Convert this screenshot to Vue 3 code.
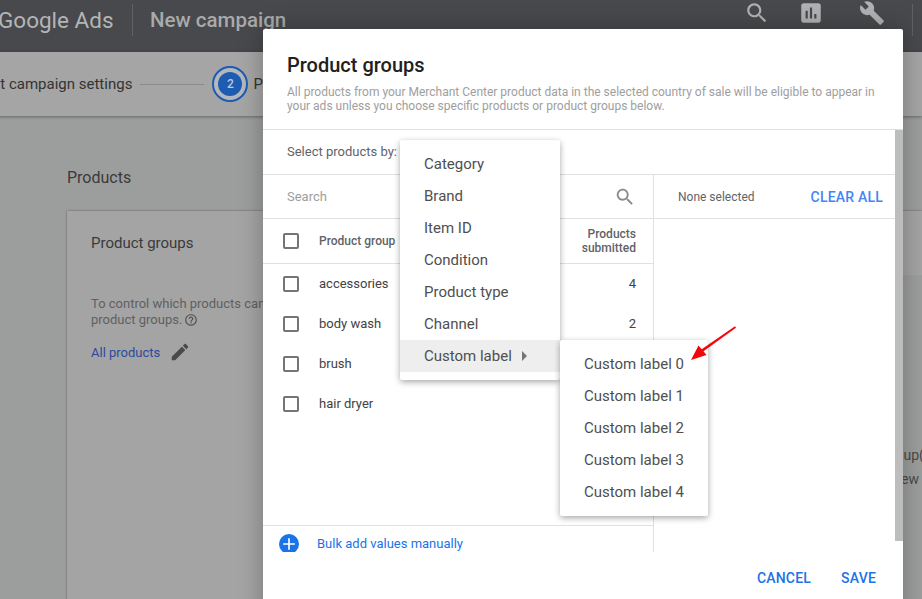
<template>
  <div class="page">
    <header class="topbar">
      <div class="brand">Google Ads</div>
      <div class="divider"></div>
      <div class="topbar-title">New campaign</div>
      <div class="topbar-icons">
        <svg class="top-icon" viewBox="0 0 24 24"><path :d="icons.search" /></svg>
        <svg class="top-icon" viewBox="0 0 24 24"><path :d="icons.assessment" /></svg>
        <svg class="top-icon wrench" viewBox="0 0 24 24"><path :d="icons.build" /></svg>
        <div class="divider"></div>
      </div>
    </header>

    <div class="stepper">
      <span class="step-text">Select campaign settings</span>
      <span class="step-line"></span>
      <span class="step-circle"><span class="step-num">2</span></span>
      <span class="step-text">Products</span>
    </div>

    <main class="content">
      <h2 class="section-title">Products</h2>
      <section class="card">
        <h3 class="card-title">Product groups</h3>
        <p class="card-text">
          To control which products can appear in your ads, select specific<br />
          product groups.<svg class="help" viewBox="0 0 24 24"><path :d="icons.help" /></svg>
        </p>
        <div class="card-link">
          <a>All products</a>
          <svg class="edit" viewBox="0 0 24 24"><path :d="icons.edit" /></svg>
        </div>
        <div class="card-side">
          <span class="side-group">group(s)</span>
          <span class="side-preview">preview</span>
        </div>
      </section>
    </main>

    <div class="modal">
      <div class="modal-head">
        <h1>Product groups</h1>
        <p>All products from your Merchant Center product data in the selected country of sale will be eligible to appear in your ads unless you choose specific products or product groups below.</p>
      </div>

      <div class="modal-body">
        <div class="select-row">Select products by:</div>
        <div class="columns">
          <div class="col-left">
            <div class="search-row">
              <span>Search</span>
              <svg class="search-icon" viewBox="0 0 24 24"><path :d="icons.search" /></svg>
            </div>
            <div class="table-head">
              <span class="check"></span>
              <span class="th-name">Product group</span>
              <span class="th-count">Products<br />submitted</span>
            </div>
            <div class="rows">
              <div v-for="row in rows" :key="row.name" class="row">
                <span class="check"></span>
                <span class="row-name">{{ row.name }}</span>
                <span class="row-count">{{ row.count }}</span>
              </div>
            </div>
            <div class="bulk-row">
              <span class="plus">
                <svg viewBox="0 0 24 24"><path d="M19 13h-6v6h-2v-6H5v-2h6V5h2v6h6v2z" /></svg>
              </span>
              <a>Bulk add values manually</a>
            </div>
          </div>
          <div class="col-right">
            <div class="selected-row">
              <span>None selected</span>
              <a>CLEAR ALL</a>
            </div>
          </div>
        </div>
        <div class="scrollbar"></div>
      </div>

      <div class="modal-foot">
        <a>CANCEL</a>
        <a>SAVE</a>
      </div>

      <ul class="menu main-menu">
        <li v-for="item in menuItems" :key="item" :class="{ active: item === 'Custom label' }">
          {{ item }}
          <span v-if="item === 'Custom label'" class="caret"></span>
        </li>
      </ul>
      <ul class="menu sub-menu">
        <li v-for="n in 5" :key="n">Custom label {{ n - 1 }}</li>
      </ul>
    </div>

    <svg class="red-arrow" viewBox="0 0 50 40" width="50" height="40">
      <path d="M45 1.2 L46 2.8 L13.5 26.3 L16.5 30 L1 35 L8.5 20.5 L11.7 24.3 Z" fill="#f5060b" />
    </svg>
  </div>
</template>

<script setup>
const icons = {
  search: 'M15.5 14h-.79l-.28-.27C15.41 12.59 16 11.11 16 9.5 16 5.91 13.09 3 9.5 3S3 5.91 3 9.5 5.91 16 9.5 16c1.61 0 3.09-.59 4.23-1.57l.27.28v.79l5 4.99L20.49 19l-4.99-5zm-6 0C7.01 14 5 11.99 5 9.5S7.01 5 9.5 5 14 7.01 14 9.5 11.99 14 9.5 14z',
  assessment: 'M19 3H5c-1.1 0-2 .9-2 2v14c0 1.1.9 2 2 2h14c1.1 0 2-.9 2-2V5c0-1.1-.9-2-2-2zM9 17H7v-7h2v7zm4 0h-2V7h2v10zm4 0h-2v-4h2v4z',
  build: 'M22.7 19l-9.1-9.1c.9-2.3.4-5-1.5-6.9-2-2-5-2.4-7.4-1.3L9 6 6 9 1.6 4.7C.4 7.1.9 10.1 2.9 12.1c1.9 1.9 4.6 2.4 6.9 1.5l9.1 9.1c.4.4 1 .4 1.4 0l2.3-2.3c.5-.4.5-1.1.1-1.4z',
  edit: 'M3 17.25V21h3.75L17.81 9.94l-3.75-3.75L3 17.25zM20.71 7.04c.39-.39.39-1.02 0-1.41l-2.34-2.34c-.39-.39-1.02-.39-1.41 0l-1.83 1.83 3.75 3.75 1.83-1.83z',
  help: 'M11 18h2v-2h-2v2zm1-16C6.48 2 2 6.48 2 12s4.48 10 10 10 10-4.48 10-10S17.52 2 12 2zm0 18c-4.41 0-8-3.59-8-8s3.59-8 8-8 8 3.59 8 8-3.59 8-8 8zm0-14c-2.21 0-4 1.79-4 4h2c0-1.1.9-2 2-2s2 .9 2 2c0 2-3 1.75-3 5h2c0-2.25 3-2.5 3-5 0-2.21-1.79-4-4-4z'
}

const rows = [
  { name: 'accessories', count: 4 },
  { name: 'body wash', count: 2 },
  { name: 'brush', count: '' },
  { name: 'hair dryer', count: '' }
]

const menuItems = ['Category', 'Brand', 'Item ID', 'Condition', 'Product type', 'Channel', 'Custom label']
</script>

<style>
html,
body {
  margin: 0;
  overflow: hidden;
  background: #9c9e9d;
}
</style>

<style scoped>
.page {
  position: relative;
  width: 922px;
  height: 599px;
  overflow: hidden;
  background: #9c9e9d;
  font-family: Roboto, sans-serif;
}

.topbar {
  height: 52px;
  display: flex;
  align-items: flex-start;
  background: #47494c;
  box-shadow: 0 1px 3px rgba(0, 0, 0, 0.3);
  position: relative;
}

.brand {
  margin-left: -2px;
  width: 134px;
  flex: none;
  padding-top: 7px;
  font-size: 22.5px;
  line-height: 26px;
  color: #b4b5b6;
  white-space: nowrap;
}

.divider {
  width: 1px;
  height: 32px;
  margin-top: 4px;
  background: #5f6163;
  flex: none;
}

.topbar-title {
  margin-left: 17px;
  padding-top: 7px;
  font-size: 20.5px;
  line-height: 26px;
  font-weight: 500;
  color: #a9aaab;
}

.topbar-icons {
  margin-left: auto;
  margin-right: 9px;
  display: flex;
  align-items: flex-start;
}

.top-icon {
  width: 26px;
  height: 26px;
  margin-right: 28px;
  fill: #b0b1b2;
}

.top-icon + .wrench {
  margin-left: 7px;
  margin-right: 27px;
}

.stepper {
  height: 64px;
  display: flex;
  align-items: center;
  justify-content: flex-start;
  margin-left: -36px;
  background: #a5a5a5;
  box-shadow: 0 1px 3px rgba(0, 0, 0, 0.35);
  position: relative;
  white-space: nowrap;
}

.step-text {
  font-size: 15px;
  color: #333;
}

.step-line {
  width: 64px;
  height: 1px;
  margin: 0 8px;
  background: #8b8b8b;
}

.step-circle {
  width: 36px;
  height: 36px;
  box-sizing: border-box;
  margin-right: 5px;
  border: 2px solid #1d5cb0;
  border-radius: 50%;
  background: #b4b8bd;
  display: flex;
  align-items: center;
  justify-content: center;
}

.step-num {
  width: 24px;
  height: 24px;
  border-radius: 50%;
  background: #1d5cb0;
  color: #b9cbe4;
  font-size: 12px;
  font-weight: 500;
  line-height: 24px;
  text-align: center;
}

.content {
  padding: 52px 0 0 67px;
}

.section-title {
  margin: 0;
  font-size: 16px;
  line-height: 19px;
  font-weight: 400;
  color: #3a3a3a;
}

.card {
  position: relative;
  margin-top: 24px;
  height: 420px;
  padding: 24px;
  background: #a4a4a4;
  box-shadow: 0 0 2px rgba(0, 0, 0, 0.4);
  box-sizing: border-box;
}

.card-title {
  margin: 0;
  font-size: 15px;
  line-height: 17px;
  font-weight: 400;
  color: #3a3a3a;
}

.card-text {
  margin: 44px 0 0;
  width: 500px;
  font-size: 13px;
  line-height: 16px;
  color: #606060;
}

.help {
  width: 14px;
  height: 14px;
  margin-left: 2px;
  vertical-align: -3px;
  fill: #505050;
}

.card-link {
  display: flex;
  align-items: center;
  gap: 9px;
  margin-top: 13px;
  font-size: 13px;
  color: #2c4a9c;
}

.edit {
  width: 22px;
  height: 22px;
  fill: #4a4a4a;
}

.card-side {
  position: absolute;
  left: 700px;
  right: 0;
  top: 64px;
  bottom: 0;
  padding-top: 172px;
  display: flex;
  flex-direction: column;
  gap: 8px;
  background: #9c9e9d;
  font-size: 14px;
  line-height: 16px;
  color: #4a4a4a;
  white-space: nowrap;
}

.side-group {
  margin-left: 116px;
}

.side-preview {
  margin-left: 104px;
}

.modal {
  position: absolute;
  left: 263px;
  top: 29px;
  width: 640px;
  height: 600px;
  background: #fff;
  border-radius: 2px;
  box-shadow: 0 0 24px rgba(0, 0, 0, 0.28);
}

.modal-head {
  height: 101px;
  box-sizing: border-box;
  padding: 25px 24px 0;
  border-bottom: 1px solid #e0e0e0;
}

.modal-head h1 {
  margin: 0;
  font-size: 20px;
  line-height: 23px;
  font-weight: 500;
  color: #212121;
}

.modal-head p {
  margin: 8px 0 0;
  font-size: 12px;
  line-height: 14px;
  color: #9e9e9e;
}

.modal-body {
  position: relative;
  height: 422px;
  overflow: hidden;
}

.select-row {
  height: 45px;
  box-sizing: border-box;
  padding: 14px 0 0 24px;
  font-size: 13px;
  line-height: 15px;
  color: #5f6368;
  border-bottom: 1px solid #e0e0e0;
  margin-right: 8px;
}

.columns {
  display: flex;
  height: 377px;
  margin-right: 8px;
}

.col-left {
  width: 390px;
  flex: none;
  display: flex;
  flex-direction: column;
  border-right: 1px solid #e0e0e0;
}

.col-right {
  flex: 1;
}

.search-row {
  height: 44px;
  box-sizing: border-box;
  flex: none;
  display: flex;
  align-items: center;
  justify-content: space-between;
  padding: 0 17px 0 24px;
  border-bottom: 1px solid #e0e0e0;
  font-size: 13px;
  color: #9e9e9e;
}

.search-icon {
  width: 22px;
  height: 22px;
  fill: #8a8a8a;
}

.table-head {
  height: 45px;
  box-sizing: border-box;
  flex: none;
  display: flex;
  align-items: center;
  padding: 0 17px 0 20px;
  border-bottom: 1px solid #e0e0e0;
  font-size: 12px;
  line-height: 14px;
  font-weight: 500;
  color: #5f6368;
}

.check {
  width: 12px;
  height: 12px;
  flex: none;
  border: 2px solid #757575;
  border-radius: 2px;
  margin-right: 20px;
}

.th-name {
  flex: 1;
}

.th-count {
  text-align: right;
}

.rows {
  flex: 1;
}

.row {
  height: 40px;
  display: flex;
  align-items: center;
  padding: 0 17px 0 20px;
  font-size: 13px;
  color: #424242;
}

.row-name {
  flex: 1;
  padding-bottom: 2px;
}

.row-count {
  padding-bottom: 2px;
}

.bulk-row {
  height: 27px;
  flex: none;
  display: flex;
  align-items: flex-start;
  padding: 8px 0 0 16px;
  box-sizing: border-box;
  border-top: 1px solid #e0e0e0;
  font-size: 13px;
  line-height: 20px;
  color: #1a73e8;
}

.plus {
  width: 20px;
  height: 20px;
  border-radius: 50%;
  background: #1a73e8;
  margin-right: 18px;
  flex: none;
}

.plus svg {
  display: block;
  width: 20px;
  height: 20px;
  fill: #fff;
}

.selected-row {
  height: 44px;
  box-sizing: border-box;
  display: flex;
  align-items: center;
  justify-content: space-between;
  padding: 0 12px 0 24px;
  border-bottom: 1px solid #e0e0e0;
  font-size: 12px;
  color: #5f6368;
}

.selected-row a {
  font-size: 14px;
  font-weight: 500;
  letter-spacing: 0.2px;
  color: #4285f4;
}

.scrollbar {
  position: absolute;
  right: 0;
  top: 0;
  width: 8px;
  height: 411px;
  background: #bdbdbd;
}

.modal-foot {
  display: flex;
  justify-content: flex-end;
  gap: 30px;
  padding: 18px 27px 0 0;
  font-size: 14px;
  line-height: 16px;
  font-weight: 500;
  letter-spacing: 0.2px;
  color: #1a73e8;
}

.menu {
  position: absolute;
  margin: 0;
  padding: 8px 0;
  list-style: none;
  background: #fff;
  border-radius: 2px;
  box-shadow: 0 2px 6px rgba(0, 0, 0, 0.35);
  font-size: 15px;
  color: #4f4f4f;
}

.menu li {
  height: 32px;
  line-height: 32px;
  padding-left: 24px;
  position: relative;
  white-space: nowrap;
}

.main-menu {
  left: 137px;
  top: 111px;
  width: 160px;
}

.sub-menu {
  left: 297px;
  top: 311px;
  width: 148px;
}

.menu li.active {
  background: #eeeeee;
}

.caret {
  position: absolute;
  left: 122px;
  top: 11px;
  width: 0;
  height: 0;
  border-left: 5px solid #757575;
  border-top: 5px solid transparent;
  border-bottom: 5px solid transparent;
}

.red-arrow {
  position: absolute;
  left: 690px;
  top: 325px;
}
</style>
